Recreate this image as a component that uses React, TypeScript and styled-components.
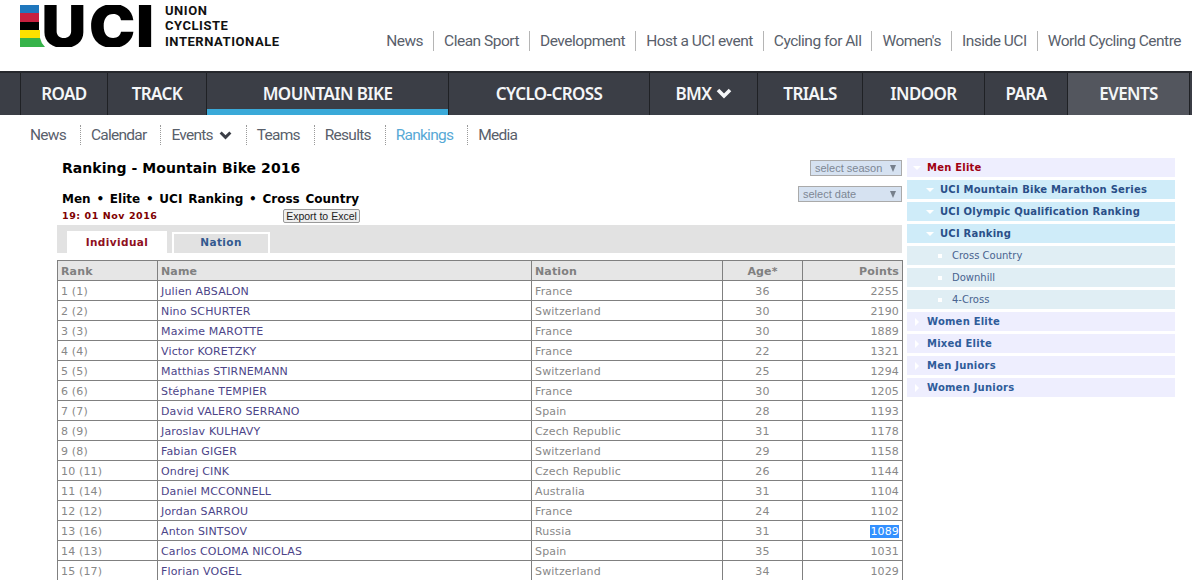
import styled, { createGlobalStyle } from 'styled-components';

const GlobalStyle = createGlobalStyle`
  html, body {
    margin: 0;
    padding: 0;
    height: 580px;
    overflow: hidden;
    background: #fff;
  }
`;

const Page = styled.div`
  width: 1192px;
  font-family: 'DejaVu Sans', Verdana, sans-serif;
`;

const Header = styled.header`
  height: 71px;
  display: flex;
  justify-content: space-between;
  padding: 0 1px 0 20px;
  box-sizing: border-box;
`;

const Logo = styled.div`
  display: flex;
  align-items: flex-start;
  padding-top: 5px;
`;

const LogoLetters = styled.text`
  font-family: Inter, sans-serif;
  font-weight: 900;
  font-size: 58px;
  fill: #000;
`;

const LogoWords = styled.div`
  font-family: Roboto, sans-serif;
  font-weight: 700;
  font-size: 13px;
  line-height: 15.3px;
  letter-spacing: 0.55px;
  color: #111;
  margin-left: 11px;
  margin-top: -2px;
`;

const TopLinks = styled.nav`
  display: flex;
  align-items: center;
  align-self: flex-start;
  margin-top: 31px;
`;

const TopLink = styled.a<{ $first?: boolean }>`
  font-family: Roboto, sans-serif;
  font-size: 15.5px;
  line-height: 20px;
  letter-spacing: -0.5px;
  color: #59606b;
  padding: 0 10px;
  border-left: ${(p) => (p.$first ? 'none' : '1px solid #b5b5b5')};
`;

const MainNav = styled.nav`
  height: 44px;
  display: flex;
  box-sizing: border-box;
  background: #3b3e46;
  border-top: 2px solid #26282d;
  padding-left: 20px;
`;

const MainItem = styled.a<{ $width: number; $active?: boolean; $shade?: boolean }>`
  width: ${(p) => p.$width}px;
  box-sizing: border-box;
  display: flex;
  align-items: center;
  justify-content: center;
  gap: 4px;
  padding-bottom: 2px;
  font-family: 'Noto Sans', sans-serif;
  font-weight: 600;
  font-size: 17px;
  letter-spacing: -0.6px;
  color: #f4f6f8;
  border-left: 1px solid #1f2125;
  border-right: ${(p) => (p.$shade ? '1px solid #1f2125' : 'none')};
  background: ${(p) => (p.$shade ? '#53565e' : 'transparent')};
  box-shadow: ${(p) => (p.$active ? 'inset 0 -6px 0 #3aa9d8' : 'none')};
`;

const SubNav = styled.nav`
  height: 40px;
  display: flex;
  align-items: center;
  padding-left: 19px;
`;

const SubLink = styled.a<{ $first?: boolean; $active?: boolean }>`
  font-family: Roboto, sans-serif;
  font-size: 15.5px;
  line-height: 20px;
  letter-spacing: -0.75px;
  padding: 0 14px 0 10px;
  display: flex;
  align-items: center;
  gap: 6px;
  color: ${(p) => (p.$active ? '#57a9d6' : '#59606b')};
  border-left: ${(p) => (p.$first ? '1px solid transparent' : '1px dotted #9a9a9a')};
`;

const Content = styled.main`
  display: flex;
  align-items: flex-start;
  gap: 5px;
  padding: 3px 0 0 57px;
`;

const LeftColumn = styled.section`
  width: 845px;
`;

const TitleArea = styled.div`
  display: flex;
  justify-content: space-between;
  height: 67px;
`;

const TitleText = styled.div`
  padding: 2px 0 0 5px;
`;

const Title = styled.h1`
  margin: 0;
  font-size: 14px;
  line-height: 17px;
  font-weight: 700;
  color: #000;
  letter-spacing: 0.05px;
`;

const Crumbs = styled.h2`
  margin: 15px 0 0;
  font-size: 12px;
  line-height: 14px;
  font-weight: 700;
  color: #000;
  word-spacing: 1.6px;
`;

const DateLine = styled.div`
  margin-top: 4px;
  font-size: 9.5px;
  line-height: 12px;
  font-weight: 700;
  color: #800000;
  letter-spacing: 0.55px;
`;

const ExportButton = styled.button`
  position: absolute;
  left: 283px;
  top: 209px;
  width: 77px;
  height: 14px;
  padding: 0;
  box-sizing: border-box;
  border: 1px solid #999;
  border-radius: 2px;
  background: #efefef;
  font-family: 'Liberation Sans', Arial, sans-serif;
  font-size: 10.5px;
  line-height: 12px;
  color: #222;
`;

const Selects = styled.div`
  display: flex;
  flex-direction: column;
  align-items: flex-end;
  gap: 10px;
  padding-top: 2px;
`;

const SelectBox = styled.div<{ $width: number }>`
  width: ${(p) => p.$width}px;
  height: 16px;
  box-sizing: border-box;
  display: flex;
  align-items: center;
  justify-content: space-between;
  padding: 0 5px 0 4px;
  background: #d6e2f1;
  border: 1px solid #aaa;
  font-family: 'Liberation Sans', Arial, sans-serif;
  font-size: 11px;
  color: #7d8794;
`;

const Arrow = styled.span`
  width: 0;
  height: 0;
  border-left: 3px solid transparent;
  border-right: 3px solid transparent;
  border-top: 7px solid #77808c;
`;

const TabBar = styled.div`
  height: 28px;
  box-sizing: border-box;
  display: flex;
  align-items: flex-end;
  gap: 5px;
  padding-left: 10px;
  background: #e2e2e2;
`;

const Tab = styled.a<{ $active?: boolean }>`
  width: ${(p) => (p.$active ? 100 : 98)}px;
  height: ${(p) => (p.$active ? 22 : 21)}px;
  box-sizing: border-box;
  display: flex;
  align-items: center;
  justify-content: center;
  padding-bottom: ${(p) => (p.$active ? 2 : 3)}px;
  font-size: 10.5px;
  font-weight: 700;
  letter-spacing: 0.4px;
  color: ${(p) => (p.$active ? '#8f0f1e' : '#33598f')};
  background: ${(p) => (p.$active ? '#fff' : '#e2e2e2')};
  border: 2px solid #fff;
  border-bottom: none;
`;

const RankTable = styled.table`
  margin-top: 7px;
  width: 845px;
  table-layout: fixed;
  border-collapse: collapse;
  font-size: 11px;
  letter-spacing: 0.15px;
  color: #888;
`;

const HeadCell = styled.th<{ $align?: string; $width: number }>`
  width: ${(p) => p.$width}px;
  height: 20px;
  box-sizing: border-box;
  padding: 1px 3px 0;
  background: #e6e6e6;
  border: 1px solid #808080;
  font-weight: 700;
  color: #808080;
  text-align: ${(p) => p.$align || 'left'};
`;

const Cell = styled.td<{ $align?: string }>`
  height: 20px;
  box-sizing: border-box;
  padding: 1px 3px 0;
  border: 1px solid #808080;
  text-align: ${(p) => p.$align || 'left'};
  white-space: nowrap;
`;

const RiderLink = styled.a`
  color: #4c4488;
`;

const Selected = styled.span`
  background: #3390ff;
  color: #fff;
`;

const SideMenu = styled.aside`
  width: 268px;
  display: flex;
  flex-direction: column;
  gap: 3px;
`;

const MenuRow = styled.a<{ $level: number; $active?: boolean }>`
  height: 19px;
  display: flex;
  align-items: center;
  padding-left: ${(p) => (p.$level === 0 ? 6 : p.$level === 1 ? 19 : 31)}px;
  background: ${(p) => (p.$level === 0 ? '#eeeefe' : p.$level === 1 ? '#cfecf9' : '#e0eef4')};
  color: ${(p) => (p.$active ? '#a00012' : p.$level === 2 ? '#48638f' : p.$level === 1 ? '#2a4f88' : '#2f5c9a')};
  font-size: 10px;
  font-weight: ${(p) => (p.$level === 2 ? 400 : 700)};
  letter-spacing: ${(p) => (p.$level === 2 ? 0 : 0.22)}px;
`;

const MenuIcon = styled.span<{ $kind: 'open' | 'closed' | 'leaf' }>`
  width: 0;
  height: 0;
  margin-right: ${(p) => (p.$kind === 'closed' ? 8 : p.$kind === 'open' ? 6 : 10)}px;
  ${(p) =>
    p.$kind === 'open'
      ? `border-left: 4px solid transparent; border-right: 4px solid transparent; border-top: 4px solid #fff;`
      : p.$kind === 'closed'
        ? `margin-left: 2px; border-top: 4px solid transparent; border-bottom: 4px solid transparent; border-left: 4px solid #fff;`
        : `border: 2px solid #fff;`}
`;

const Chevron = ({ color, size }: { color: string; size: number }) => (
  <svg width={size} height={size * 0.75} viewBox="0 0 16 12" fill="none">
    <path d="M2 3l6 6 6-6" stroke={color} strokeWidth="3.6" />
  </svg>
);

const mainItems = [
  { label: 'ROAD', width: 87 },
  { label: 'TRACK', width: 99 },
  { label: 'MOUNTAIN BIKE', width: 242, active: true },
  { label: 'CYCLO-CROSS', width: 201 },
  { label: 'BMX', width: 108, chevron: true },
  { label: 'TRIALS', width: 105 },
  { label: 'INDOOR', width: 122 },
  { label: 'PARA', width: 83 },
  { label: 'EVENTS', width: 123, shade: true },
];

const topLinks = ['News', 'Clean Sport', 'Development', 'Host a UCI event', 'Cycling for All', "Women's", 'Inside UCI', 'World Cycling Centre'];

const riders = [
  ['1 (1)', 'Julien ABSALON', 'France', '36', '2255'],
  ['2 (2)', 'Nino SCHURTER', 'Switzerland', '30', '2190'],
  ['3 (3)', 'Maxime MAROTTE', 'France', '30', '1889'],
  ['4 (4)', 'Victor KORETZKY', 'France', '22', '1321'],
  ['5 (5)', 'Matthias STIRNEMANN', 'Switzerland', '25', '1294'],
  ['6 (6)', 'Stéphane TEMPIER', 'France', '30', '1205'],
  ['7 (7)', 'David VALERO SERRANO', 'Spain', '28', '1193'],
  ['8 (9)', 'Jaroslav KULHAVY', 'Czech Republic', '31', '1178'],
  ['9 (8)', 'Fabian GIGER', 'Switzerland', '29', '1158'],
  ['10 (11)', 'Ondrej CINK', 'Czech Republic', '26', '1144'],
  ['11 (14)', 'Daniel MCCONNELL', 'Australia', '31', '1104'],
  ['12 (12)', 'Jordan SARROU', 'France', '24', '1102'],
  ['13 (16)', 'Anton SINTSOV', 'Russia', '31', '1089'],
  ['14 (13)', 'Carlos COLOMA NICOLAS', 'Spain', '35', '1031'],
  ['15 (17)', 'Florian VOGEL', 'Switzerland', '34', '1029'],
];

const menu: { label: string; level: number; icon: 'open' | 'closed' | 'leaf'; active?: boolean }[] = [
  { label: 'Men Elite', level: 0, icon: 'open', active: true },
  { label: 'UCI Mountain Bike Marathon Series', level: 1, icon: 'open' },
  { label: 'UCI Olympic Qualification Ranking', level: 1, icon: 'open' },
  { label: 'UCI Ranking', level: 1, icon: 'open' },
  { label: 'Cross Country', level: 2, icon: 'leaf' },
  { label: 'Downhill', level: 2, icon: 'leaf' },
  { label: '4-Cross', level: 2, icon: 'leaf' },
  { label: 'Women Elite', level: 0, icon: 'closed' },
  { label: 'Mixed Elite', level: 0, icon: 'closed' },
  { label: 'Men Juniors', level: 0, icon: 'closed' },
  { label: 'Women Juniors', level: 0, icon: 'closed' },
];

const App = () => {
  return (
    <Page>
      <GlobalStyle />
      <Header>
        <Logo>
          <svg width="134" height="42" viewBox="0 0 134 42">
            <rect x="0" y="0" width="19" height="8" fill="#1f77bd" />
            <rect x="0" y="8" width="19" height="9" fill="#c8203f" />
            <rect x="0" y="17" width="19" height="8" fill="#000" />
            <rect x="0" y="25" width="20" height="8" fill="#fbe100" />
            <path d="M0 33h20q1 5 5 9H0z" fill="#37b34a" />
            <LogoLetters x="20 64.5 108.4" y="42" transform="scale(1.07 1)">
              UCI
            </LogoLetters>
          </svg>
          <LogoWords>
            UNION
            <br />
            CYCLISTE
            <br />
            INTERNATIONALE
          </LogoWords>
        </Logo>
        <TopLinks>
          {topLinks.map((l, i) => (
            <TopLink key={l} $first={i === 0}>
              {l}
            </TopLink>
          ))}
        </TopLinks>
      </Header>

      <MainNav>
        {mainItems.map((m) => (
          <MainItem key={m.label} $width={m.width} $active={m.active} $shade={m.shade}>
            {m.label}
            {m.chevron && <Chevron color="#f4f6f8" size={16} />}
          </MainItem>
        ))}
      </MainNav>

      <SubNav>
        <SubLink $first>News</SubLink>
        <SubLink>Calendar</SubLink>
        <SubLink>
          Events <Chevron color="#3b3e46" size={13} />
        </SubLink>
        <SubLink>Teams</SubLink>
        <SubLink>Results</SubLink>
        <SubLink $active>Rankings</SubLink>
        <SubLink>Media</SubLink>
      </SubNav>

      <Content>
        <LeftColumn>
          <TitleArea>
            <TitleText>
              <Title>Ranking - Mountain Bike 2016</Title>
              <Crumbs>Men • Elite • UCI Ranking • Cross Country</Crumbs>
              <DateLine>19: 01 Nov 2016</DateLine>
            </TitleText>
            <Selects>
              <SelectBox $width={92}>
                select season <Arrow />
              </SelectBox>
              <SelectBox $width={104}>
                select date <Arrow />
              </SelectBox>
            </Selects>
          </TitleArea>
          <ExportButton>Export to Excel</ExportButton>
          <TabBar>
            <Tab $active>Individual</Tab>
            <Tab>Nation</Tab>
          </TabBar>
          <RankTable>
            <thead>
              <tr>
                <HeadCell $width={100}>Rank</HeadCell>
                <HeadCell $width={374}>Name</HeadCell>
                <HeadCell $width={191}>Nation</HeadCell>
                <HeadCell $width={80} $align="center">
                  Age*
                </HeadCell>
                <HeadCell $width={100} $align="right">
                  Points
                </HeadCell>
              </tr>
            </thead>
            <tbody>
              {riders.map((r) => (
                <tr key={r[0]}>
                  <Cell>{r[0]}</Cell>
                  <Cell>
                    <RiderLink>{r[1]}</RiderLink>
                  </Cell>
                  <Cell>{r[2]}</Cell>
                  <Cell $align="center">{r[3]}</Cell>
                  <Cell $align="right">{r[4] === '1089' ? <Selected>{r[4]}</Selected> : r[4]}</Cell>
                </tr>
              ))}
            </tbody>
          </RankTable>
        </LeftColumn>

        <SideMenu>
          {menu.map((m) => (
            <MenuRow key={m.label} $level={m.level} $active={m.active}>
              <MenuIcon $kind={m.icon} />
              {m.label}
            </MenuRow>
          ))}
        </SideMenu>
      </Content>
    </Page>
  );
};

export default App;
